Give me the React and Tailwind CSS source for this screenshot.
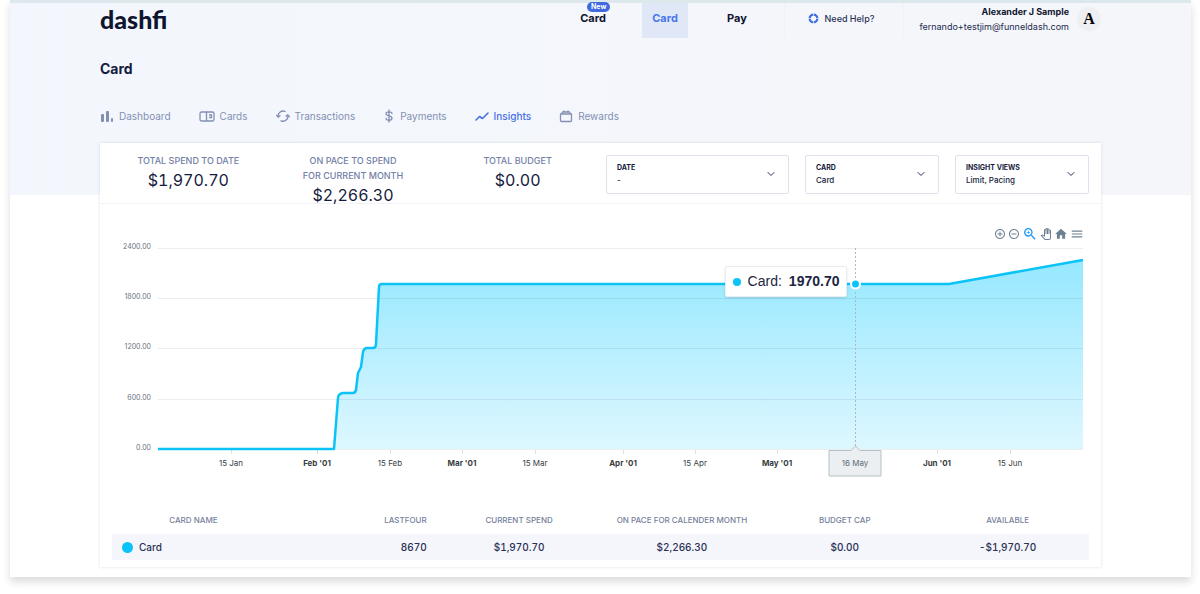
import React from 'react';
import { LuChevronDown } from 'react-icons/lu';
import {
  MdAddCircleOutline,
  MdHome,
  MdMenu,
  MdOutlinePanTool,
  MdRemoveCircleOutline,
  MdZoomIn
} from 'react-icons/md';

const tabs = [
  { name: 'Dashboard', icon: DashboardIcon },
  { name: 'Cards', icon: CardsIcon },
  { name: 'Transactions', icon: TransactionsIcon },
  { name: 'Payments', icon: PaymentsIcon },
  { name: 'Insights', icon: InsightsIcon, active: true },
  { name: 'Rewards', icon: RewardsIcon }
];

const tools = [
  { name: 'Zoom in', icon: MdAddCircleOutline, size: 'size-3' },
  { name: 'Zoom out', icon: MdRemoveCircleOutline, size: 'size-3' },
  { name: 'Selection zoom', icon: MdZoomIn, size: 'size-4', active: true },
  { name: 'Pan', icon: MdOutlinePanTool, size: 'size-3' },
  { name: 'Reset', icon: MdHome, size: 'size-[14px]' },
  { name: 'Menu', icon: MdMenu, size: 'size-[14px]' }
];

const yTicks = [
  { label: '2400.00', y: 6 },
  { label: '1800.00', y: 56 },
  { label: '1200.00', y: 106 },
  { label: '600.00', y: 157 },
  { label: '0.00', y: 207 }
];

const xTicks = [
  { label: '15 Jan', x: 131 },
  { label: "Feb '01", x: 217, bold: true },
  { label: '15 Feb', x: 290 },
  { label: "Mar '01", x: 362, bold: true },
  { label: '15 Mar', x: 435 },
  { label: "Apr '01", x: 523, bold: true },
  { label: '15 Apr', x: 595 },
  { label: "May '01", x: 677, bold: true },
  { label: "Jun '01", x: 837, bold: true },
  { label: '15 Jun', x: 910 }
];

const LINE =
  'M58 207 H234 L238 156 Q238 152 243 151 H253 Q255 151 256 148 L258 131 L261 125 L263 110 Q264 106 267 106 H273 Q276 106 276 102 L279 45 Q279 42 282 42 H849 L983 18';

function DashboardIcon() {
  return (
    <svg width="14" height="14" viewBox="0 0 14 14" fill="currentColor" aria-hidden="true">
      <rect x="1" y="5" width="3" height="8" rx="1" />
      <rect x="6" y="2" width="3" height="11" rx="1" />
      <rect x="11" y="9" width="2" height="4" rx="1" />
    </svg>
  );
}

function CardsIcon() {
  return (
    <svg width="16" height="14" viewBox="0 0 16 14" fill="none" stroke="currentColor" strokeWidth="1.3" aria-hidden="true">
      <rect x="1" y="3" width="14" height="9" rx="1.5" />
      <path d="M7.5 3v9M10 6h2.5v2.5H10" />
    </svg>
  );
}

function TransactionsIcon() {
  return (
    <svg width="14" height="14" viewBox="0 0 14 14" fill="none" stroke="currentColor" strokeWidth="1.3" strokeLinecap="round" strokeLinejoin="round" aria-hidden="true">
      <path d="M9 2.4A5 5 0 0 0 2.2 8M.7 6.3 2.2 8.2 4 6.7" />
      <path d="M5 11.8A5 5 0 0 0 11.8 6M10 7.3 11.8 5.8 13.3 7.7" />
    </svg>
  );
}

function PaymentsIcon() {
  return (
    <svg width="12" height="14" viewBox="-1 0 12 14" fill="none" stroke="currentColor" strokeWidth="1.3" strokeLinecap="round" aria-hidden="true">
      <path d="M8 4.6C8 3.4 6.8 2.8 5 2.8S2 3.5 2 4.8C2 7.5 8 6.2 8 9c0 1.4-1.3 2.2-3 2.2S2 10.5 2 9.2M5 1v12" />
    </svg>
  );
}

function InsightsIcon() {
  return (
    <svg width="14" height="14" viewBox="0 0 14 14" fill="none" stroke="currentColor" strokeWidth="1.6" strokeLinecap="round" strokeLinejoin="round" aria-hidden="true">
      <path d="M1 11 4.5 7.5 7.5 9.5 13 4" />
    </svg>
  );
}

function RewardsIcon() {
  return (
    <svg width="14" height="14" viewBox="0 0 14 14" fill="none" stroke="currentColor" strokeWidth="1.3" strokeLinejoin="round" aria-hidden="true">
      <path d="M1.5 5h11v6.500a1 1 0 0 1-1 1h-9a1 1 0 0 1-1-1zM2.500 5l1-2h7l1 2M5 3V1.500M9 3V1.500" />
    </svg>
  );
}

function HelpIcon() {
  return (
    <svg width="11" height="11" viewBox="0 0 12 12" fill="none" aria-hidden="true">
      <circle cx="6" cy="6" r="4.2" stroke="#3f6ae0" strokeWidth="2.4" />
      <path d="M6 0v3M6 9V12M0 6h3M9 6H12" stroke="#cfdcfa" strokeWidth="1.2" />
    </svg>
  );
}

const Header = () => (
  <header className="flex items-start justify-between">
    <a href="#" className="pt-0.5 font-[Lato] text-[25px] leading-7 font-black text-[#10152f]">
      dashfi
    </a>
    <div className="flex h-[35px]">
      <nav className="mr-6 flex gap-[26px] text-[11px] font-bold text-[#10152f]">
        <a href="#" className="relative flex w-[46px] items-center justify-center pb-1">
          Card
          <span className="absolute -top-px left-[17px] rounded-full bg-[#3f6ae0] px-1 text-[7px] leading-[10px] text-white">
            New
          </span>
        </a>
        <a href="#" className="flex w-[46px] items-center justify-center bg-[#e0e8f8] pb-1 text-[#4a76ea]">
          Card
        </a>
        <a href="#" className="flex w-[46px] items-center justify-center pb-1">
          Pay
        </a>
      </nav>
      <a
        href="#"
        className="flex w-[120px] items-center justify-center gap-1.5 border-x border-[#eff2f8] pr-1.5 pb-1 text-[9px] font-medium text-[#2c3357]"
      >
        <HelpIcon />
        Need Help?
      </a>
      <div className="flex w-[197px] items-center justify-end gap-2 pb-1">
        <div className="text-right text-[#232a4d]">
          <p className="text-[9px] leading-[15px] font-bold text-[#10152f]">Alexander J Sample</p>
          <p className="text-[9px] leading-[15px]">fernando+testjim@funneldash.com</p>
        </div>
        <span className="flex size-6 items-center justify-center rounded-full bg-[#eeeff2] font-['Liberation_Serif'] text-[16px] font-bold text-black">
          A
        </span>
      </div>
    </div>
  </header>
);

const Tabs = () => (
  <nav className="mt-[26px] flex h-5 items-center gap-7 text-[10px] text-[#8390b3]">
    {tabs.map(({ name, icon: Icon, active }) => (
      <a
        key={name}
        href="#"
        className={active ? 'flex items-center gap-[5px] font-medium text-[#4470e8]' : 'flex items-center gap-[5px]'}
      >
        <Icon />
        {name}
      </a>
    ))}
  </nav>
);

const Stat = ({ label, value }) => (
  <div className="flex flex-col items-center text-center">
    <p className="w-[105px] text-[9px] leading-[15px] font-medium text-[#7380a6] uppercase">{label}</p>
    <p className="mt-1 text-[16px] leading-4 text-[#161c3d] tabular-nums">{value}</p>
  </div>
);

const FilterSelect = ({ id, label, value, className }) => (
  <div className={`relative h-[39px] rounded-xs border border-[#dfe2ec] px-2.5 pt-[7px] ${className}`}>
    <label htmlFor={id} className="block text-[7px] leading-[10px] font-bold text-[#161c3d] uppercase">
      {label}
    </label>
    <select
      id={id}
      className="block h-[14px] w-full appearance-none bg-transparent text-[8px] leading-[14px] font-medium text-[#161c3d] focus:outline-none"
    >
      <option>{value}</option>
    </select>
    <LuChevronDown className="pointer-events-none absolute top-3 right-[11px] size-3 text-[#2c3357]" />
  </div>
);

const Chart = () => (
  <section>
    <div className="flex h-[38px] items-end justify-end pr-[17px]">
      <div className="flex h-4 items-center gap-0.5">
        {tools.map(({ name, icon: Icon, size, active }) => (
          <button
            key={name}
            type="button"
            aria-label={name}
            className={active ? 'text-[#1e9bf8]' : 'text-[#6e8192]'}
          >
            <Icon className={size} />
          </button>
        ))}
      </div>
    </div>
    <div className="relative">
      <svg viewBox="0 0 1001 240" className="block w-full">
        <defs>
          <linearGradient id="spendFill" x1="0" y1="0" x2="0" y2="1">
            <stop offset="0" stopColor="#95e8ff" />
            <stop offset="1" stopColor="#def7ff" />
          </linearGradient>
        </defs>
        <path d={`${LINE} V207 H58 Z`} fill="url(#spendFill)" />
        {yTicks.map(({ label, y }) => (
          <g key={label}>
            <path d={`M58 ${y}.5H983`} stroke="#3c5064" strokeOpacity="0.1" />
            <text x="51" y={y + 1} textAnchor="end" fontSize="7" fill="#6b7280">
              {label}
            </text>
          </g>
        ))}
        {xTicks.map(({ label, x, bold }) => (
          <g key={label}>
            <path d={`M${x}.5 208v4`} stroke="#e0e0e0" />
            <text x={x} y="224" textAnchor="middle" fontSize="8" fontWeight={bold ? 700 : 400} fill="#373d3f">
              {label}
            </text>
          </g>
        ))}
        <path d="M755.5 6V207" stroke="#a9bac4" strokeDasharray="2 2" />
        <path d={LINE} fill="none" stroke="#0cc3f8" strokeWidth="2.5" strokeLinejoin="round" />
        <circle cx="755.5" cy="42" r="4.5" fill="#0cc3f8" stroke="#fff" strokeWidth="2" />
        <path d="M729 208.5H751L755.5 204L760 208.5H781V234H729Z" fill="#eceff1" stroke="#b4c0c7" />
        <text x="755" y="224" textAnchor="middle" fontSize="8" fill="#5f6b73">
          16 May
        </text>
      </svg>
      <div className="absolute top-[10%] left-[62.4%] flex h-[31px] items-center rounded-xs border border-[#ebeef0] bg-white px-[7px] font-['Liberation_Sans'] text-[14px] text-[#1e2542] shadow-sm">
        <span className="mr-[7px] size-2 rounded-full bg-[#0cc3f8]" />
        Card:
        <b className="ml-[7px]">1970.70</b>
      </div>
    </div>
  </section>
);

const SpendTable = () => (
  <table className="w-full table-fixed text-center">
    <thead>
      <tr className="h-7 text-[8px] text-[#777f9b] uppercase">
        <th className="p-0 font-medium">Card name</th>
        <th className="py-0 pr-[11px] text-right font-medium">Lastfour</th>
        <th className="p-0 font-medium">Current spend</th>
        <th className="p-0 font-medium">On pace for calender month</th>
        <th className="p-0 font-medium">Budget cap</th>
        <th className="p-0 font-medium">Available</th>
      </tr>
    </thead>
    <tbody>
      <tr className="h-[26px] bg-[#f4f6fb] text-[10px] font-medium text-[#2a3155] tabular-nums">
        <td className="py-0 pl-2.5">
          <div className="flex items-center gap-1.5">
            <span className="size-[11px] rounded-full bg-[#0cc3f8]" />
            Card
          </div>
        </td>
        <td className="py-0 pr-[11px] text-right">8670</td>
        <td className="p-0">$1,970.70</td>
        <td className="p-0">$2,266.30</td>
        <td className="p-0">$0.00</td>
        <td className="p-0">-$1,970.70</td>
      </tr>
    </tbody>
  </table>
);

const App = () => {
  return (
    <div className="bg-white pb-4 font-[Inter,sans-serif]">
      <div className="mr-[9px] ml-[10px] border-t-[3px] border-[#dde8ec] bg-[linear-gradient(90deg,#f3f7fd,#f5f6fa)] bg-[length:100%_192px] bg-no-repeat px-[90px] pb-2.5 shadow-[0_5px_8px_rgba(0,0,0,0.14)]">
        <Header />
        <h1 className="mt-5 text-[14px] leading-[22px] font-bold text-[#161c3d]">Card</h1>
        <Tabs />

        <main className="mt-[17px] bg-white pb-[7px] shadow-[0_0_3px_rgba(30,40,80,0.14)]">
          <div className="flex border-b border-[#f1f3f6]">
            <div className="grid flex-1 grid-cols-3 px-1.5 pt-2.5">
              <Stat label="Total spend to date" value="$1,970.70" />
              <Stat label="On pace to spend for current month" value="$2,266.30" />
              <Stat label="Total budget" value="$0.00" />
            </div>
            <div className="flex gap-4 pt-3 pr-3">
              <FilterSelect id="date" label="Date" value="-" className="w-[183px]" />
              <FilterSelect id="card" label="Card" value="Card" className="w-[134px]" />
              <FilterSelect id="views" label="Insight views" value="Limit, Pacing" className="w-[134px]" />
            </div>
          </div>
          <Chart />
          <div className="mt-6 px-3">
            <SpendTable />
          </div>
        </main>
      </div>
    </div>
  );
};

export default App;
